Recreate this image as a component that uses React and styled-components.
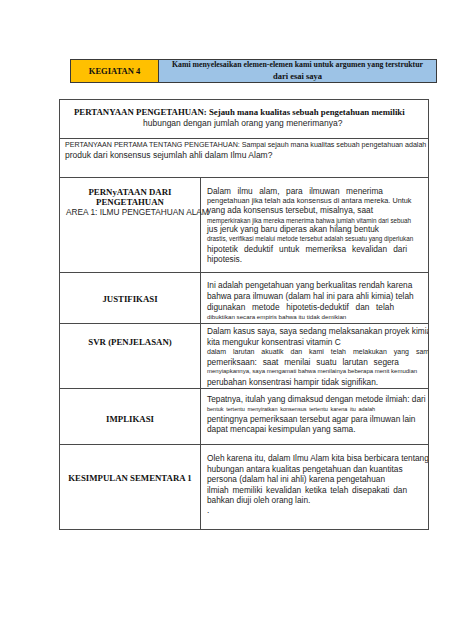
import React from "react";
import styled, { createGlobalStyle } from "styled-components";

const GlobalStyle = createGlobalStyle`
  html, body { margin: 0; padding: 0; background: #ffffff; }
  body { font-family: "Liberation Sans", Arial, sans-serif; }
`;

const SANS = `"Liberation Sans", Arial, sans-serif`;
const SERIF = `"Liberation Serif", "Times New Roman", serif`;

const Page = styled.div`
  width: 474px;
  height: 632px;
  padding-top: 59px;
  box-sizing: border-box;
  overflow: hidden;
`;

const HeaderBar = styled.div`
  margin-left: 70px;
  width: 367px;
  height: 24px;
  box-sizing: border-box;
  display: grid;
  grid-template-columns: 87px 1fr;
  border: 1px solid #3a3a3a;
  border-bottom-width: 1.5px;
`;

const HeaderCell = styled.div`
  background: ${(p) => p.$bg};
  border-left: ${(p) => (p.$divider ? "1px solid #3a3a3a" : "none")};
  display: flex;
  flex-direction: column;
  align-items: center;
  justify-content: ${(p) => (p.$center ? "center" : "flex-start")};
  font-family: ${SERIF};
  font-weight: bold;
  color: #111;
`;

const HeaderText = styled.div`
  font-size: ${(p) => p.$size}px;
  line-height: ${(p) => p.$lh}px;
  white-space: nowrap;
`;

const Table = styled.div`
  margin-top: 16px;
  margin-left: 59px;
  width: 370px;
  box-sizing: border-box;
  border: 1px solid #4a4a4a;
  overflow: hidden;
`;

const FullRow = styled.div`
  height: ${(p) => p.$h}px;
  box-sizing: border-box;
  border-bottom: 1px solid #4a4a4a;
  padding: ${(p) => p.$pt}px 0 0 ${(p) => p.$pl}px;
`;

const SplitRow = styled.div`
  height: ${(p) => p.$h}px;
  box-sizing: border-box;
  border-bottom: ${(p) => (p.$last ? "none" : "1px solid #4a4a4a")};
  display: grid;
  grid-template-columns: 141px 1fr;
`;

const LabelCell = styled.div`
  border-right: 1px solid #4a4a4a;
  padding-top: ${(p) => p.$pt}px;
  display: flex;
  flex-direction: column;
  align-items: center;
  overflow: visible;
  position: relative;
  z-index: 1;
`;

const Label = styled.div`
  font-family: ${SERIF};
  font-weight: bold;
  font-size: 8.8px;
  line-height: 10px;
  color: #111;
  white-space: nowrap;
  text-align: center;
`;

const SansLabel = styled.div`
  font-family: ${SANS};
  font-size: 8.3px;
  line-height: 10px;
  color: #1e1e1e;
  white-space: nowrap;
  align-self: flex-start;
  margin-left: 6px;
`;

const ContentCell = styled.div`
  padding: ${(p) => p.$pt}px 0 0 6px;
  overflow: hidden;
`;

const Line = styled.div`
  font-family: ${SANS};
  font-size: ${(p) => p.$size || 8.3}px;
  line-height: ${(p) => p.$lh || 10}px;
  color: #1e1e1e;
  white-space: ${(p) => (p.$w ? "normal" : "nowrap")};
  width: ${(p) => (p.$w ? `${p.$w}px` : "auto")};
  text-align: ${(p) => (p.$w ? "justify" : "left")};
  text-align-last: ${(p) => (p.$w ? "justify" : "auto")};
  height: ${(p) => p.$lh || 10}px;
  padding-left: ${(p) => p.$indent || 0}px;
`;

const BoldInline = styled.span`
  font-family: ${SERIF};
  font-weight: bold;
  font-size: 8.8px;
  color: #111;
`;

export default function App() {
  return (
    <>
      <GlobalStyle />
      <Page>
        <HeaderBar>
          <HeaderCell $bg="#ffc000" $center>
            <HeaderText $size={8.5} $lh={10}>KEGIATAN 4</HeaderText>
          </HeaderCell>
          <HeaderCell $bg="#9dc3e6" $divider>
            <HeaderText $size={7.8} $lh={10.5}>
              Kami menyelesaikan elemen-elemen kami untuk argumen yang terstruktur
            </HeaderText>
            <HeaderText $size={8.5} $lh={11}>dari esai saya</HeaderText>
          </HeaderCell>
        </HeaderBar>

        <Table>
          <FullRow $h={39} $pt={7} $pl={14}>
            <Line $lh={11}>
              <BoldInline>
                PERTANYAAN PENGETAHUAN: Sejauh mana kualitas sebuah pengetahuan memiliki
              </BoldInline>
            </Line>
            <Line $lh={11} $size={8.5} $indent={69}>
              hubungan dengan jumlah orang yang menerimanya?
            </Line>
          </FullRow>

          <FullRow $h={39} $pt={1} $pl={5}>
            <Line $size={7.1} $lh={10}>
              PERTANYAAN PERTAMA TENTANG PENGETAHUAN: Sampai sejauh mana kualitas sebuah pengetahuan adalah
            </Line>
            <Line $size={8.5} $lh={10}>produk dari konsensus sejumlah ahli dalam Ilmu Alam?</Line>
          </FullRow>

          <SplitRow $h={95}>
            <LabelCell $pt={9}>
              <Label>PERNyATAAN DARI</Label>
              <Label>PENGETAHUAN</Label>
              <SansLabel>AREA 1: ILMU PENGETAHUAN ALAM</SansLabel>
            </LabelCell>
            <ContentCell $pt={8}>
              <Line $w={176}>Dalam ilmu alam, para ilmuwan menerima</Line>
              <Line $size={7.3}>
                pengetahuan jika telah ada konsensus di antara mereka. Untuk
              </Line>
              <Line $lh={9.5}>yang ada konsensus tersebut, misalnya, saat</Line>
              <Line $size={6.3} $lh={9}>
                memperkirakan jika mereka menerima bahwa jumlah vitamin dari sebuah
              </Line>
              <Line $w={172} $lh={9.5}>jus jeruk yang baru diperas akan hilang bentuk</Line>
              <Line $size={6.3} $lh={9.5}>
                drastis, verifikasi melalui metode tersebut adalah sesuatu yang diperlukan
              </Line>
              <Line $w={200} $lh={10.5}>hipotetik deduktif untuk memeriksa kevalidan dari</Line>
              <Line $lh={10.5}>hipotesis.</Line>
            </ContentCell>
          </SplitRow>

          <SplitRow $h={51}>
            <LabelCell $pt={21}>
              <Label>JUSTIFIKASI</Label>
            </LabelCell>
            <ContentCell $pt={7}>
              <Line $lh={11}>Ini adalah pengetahuan yang berkualitas rendah karena</Line>
              <Line $lh={11}>bahwa para ilmuwan (dalam hal ini para ahli kimia) telah</Line>
              <Line $w={187} $lh={10}>digunakan metode hipotetis-deduktif dan telah</Line>
              <Line $size={6.2} $lh={10}>dibuktikan secara empiris bahwa itu tidak demikian</Line>
            </ContentCell>
          </SplitRow>

          <SplitRow $h={65}>
            <LabelCell $pt={13}>
              <Label>SVR (PENJELASAN)</Label>
            </LabelCell>
            <ContentCell $pt={2}>
              <Line $lh={11}>Dalam kasus saya, saya sedang melaksanakan proyek kimia di</Line>
              <Line $lh={10}>kita mengukur konsentrasi vitamin C</Line>
              <Line $size={7} $w={226} $lh={10}>
                dalam larutan akuatik dan kami telah melakukan yang sama
              </Line>
              <Line $w={192} $lh={10}>pemeriksaan: saat menilai suatu larutan segera</Line>
              <Line $size={6} $lh={9.5}>
                menyiapkannya, saya mengamati bahwa menilainya beberapa menit kemudian
              </Line>
              <Line $lh={11}>perubahan konsentrasi hampir tidak signifikan.</Line>
            </ContentCell>
          </SplitRow>

          <SplitRow $h={56}>
            <LabelCell $pt={25}>
              <Label>IMPLIKASI</Label>
            </LabelCell>
            <ContentCell $pt={5}>
              <Line $lh={10}>Tepatnya, itulah yang dimaksud dengan metode ilmiah: dari</Line>
              <Line $size={5.5} $w={168} $lh={10}>
                bentuk tertentu menyiratkan konsensus tertentu karena itu adalah
              </Line>
              <Line $lh={10}>pentingnya pemeriksaan tersebut agar para ilmuwan lain</Line>
              <Line $lh={10}>dapat mencapai kesimpulan yang sama.</Line>
            </ContentCell>
          </SplitRow>

          <SplitRow $h={84} $last>
            <LabelCell $pt={28}>
              <Label>KESIMPULAN SEMENTARA 1</Label>
            </LabelCell>
            <ContentCell $pt={8}>
              <Line $lh={10.5}>Oleh karena itu, dalam Ilmu Alam kita bisa berbicara tentang</Line>
              <Line $lh={10.5}>hubungan antara kualitas pengetahuan dan kuantitas</Line>
              <Line $lh={10.5}>persona (dalam hal ini ahli) karena pengetahuan</Line>
              <Line $w={200} $lh={10}>ilmiah memiliki kevalidan ketika telah disepakati dan</Line>
              <Line $lh={10.5}>bahkan diuji oleh orang lain.</Line>
              <Line $lh={10}>.</Line>
            </ContentCell>
          </SplitRow>
        </Table>
      </Page>
    </>
  );
}
